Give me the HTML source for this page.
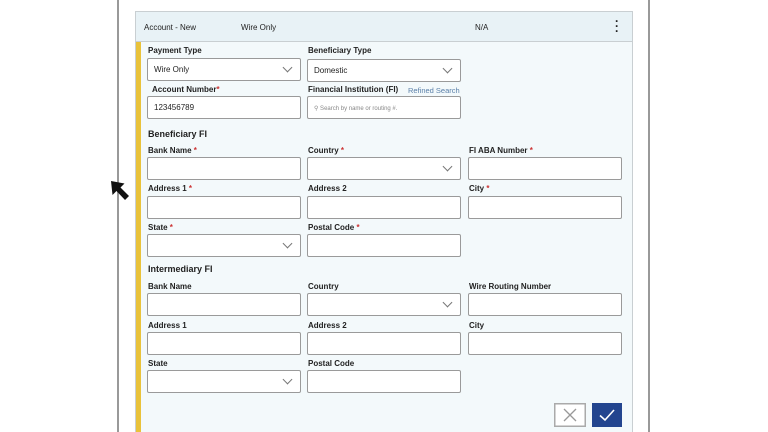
<!DOCTYPE html>
<html><head><meta charset="utf-8"><style>
*{box-sizing:border-box;margin:0;padding:0}
html,body{width:768px;height:432px;overflow:hidden}
body{background:#fff;position:relative;font-family:"Liberation Sans",sans-serif;color:#222}
.frame{position:absolute;top:0;height:432px;width:2px;background:#999}
.card{position:absolute;left:135px;top:11px;width:498px;height:430px;border:1px solid #c9cfd2;background:#f3f9fb}
.hdr{position:absolute;left:0;top:0;width:496px;height:30px;background:#e8f2f6;border-bottom:1px solid #c9cfd2;font-size:8px}
.yb{position:absolute;left:0;top:30px;width:5px;height:400px;background:#e9c23a}
.t{position:absolute;font-size:8px;font-weight:bold;color:#222;white-space:nowrap}
.t i{color:#c33;font-style:normal}
.h{position:absolute;font-size:9px;font-weight:bold;color:#222}
.in{position:absolute;width:154px;height:23px;border:1.5px solid #9a9a9a;border-radius:2px;background:#fff;font-size:8px;padding:6px 6px;color:#222}
.dd::after{content:"";position:absolute;right:9px;top:5px;width:6px;height:6px;border-right:1.3px solid #777;border-bottom:1.3px solid #777;transform:rotate(45deg)}
</style></head><body>
<div class="frame" style="left:117px"></div>
<div class="frame" style="left:648px"></div>
<div class="card">
<div class="hdr">
<span style="position:absolute;left:8px;top:11px">Account - New</span>
<span style="position:absolute;left:105px;top:11px">Wire Only</span>
<span style="position:absolute;left:339px;top:11px">N/A</span>
<span style="position:absolute;left:479px;top:7px;font-size:12px;font-weight:bold;line-height:5px">·<br>·<br>·</span>
</div>
<div class="yb"></div>
</div>
<div class="t" style="left:148px;top:46px">Payment Type</div>
<div class="in dd" style="left:147px;top:58px">Wire Only</div>
<div class="t" style="left:308px;top:46px">Beneficiary Type</div>
<div class="in dd" style="left:307px;top:59px">Domestic</div>
<div class="t" style="left:152px;top:85px">Account Number<i>*</i></div>
<div class="in" style="left:147px;top:96px">123456789</div>
<div class="t" style="left:308px;top:85px">Financial Institution (FI)</div>
<div class="t" style="left:408px;top:86px;font-weight:normal;color:#5a7fa8;font-size:7.5px">Refined Search</div>
<div class="in" style="left:307px;top:96px;font-size:6px;color:#888;padding-top:8px">⚲ Search by name or routing #.</div>

<div class="h" style="left:148px;top:129px">Beneficiary FI</div>
<div class="t" style="left:148px;top:146px">Bank Name <i>*</i></div>
<div class="in" style="left:147px;top:157px"></div>
<div class="t" style="left:308px;top:146px">Country <i>*</i></div>
<div class="in dd" style="left:307px;top:157px"></div>
<div class="t" style="left:469px;top:146px">FI ABA Number <i>*</i></div>
<div class="in" style="left:468px;top:157px"></div>
<div class="t" style="left:148px;top:184px">Address 1 <i>*</i></div>
<div class="in" style="left:147px;top:196px"></div>
<div class="t" style="left:308px;top:184px">Address 2</div>
<div class="in" style="left:307px;top:196px"></div>
<div class="t" style="left:469px;top:184px">City <i>*</i></div>
<div class="in" style="left:468px;top:196px"></div>
<div class="t" style="left:148px;top:223px">State <i>*</i></div>
<div class="in dd" style="left:147px;top:234px"></div>
<div class="t" style="left:308px;top:223px">Postal Code <i>*</i></div>
<div class="in" style="left:307px;top:234px"></div>

<div class="h" style="left:148px;top:264px">Intermediary FI</div>
<div class="t" style="left:148px;top:282px">Bank Name</div>
<div class="in" style="left:147px;top:293px"></div>
<div class="t" style="left:308px;top:282px">Country</div>
<div class="in dd" style="left:307px;top:293px"></div>
<div class="t" style="left:469px;top:282px">Wire Routing Number</div>
<div class="in" style="left:468px;top:293px"></div>
<div class="t" style="left:148px;top:321px">Address 1</div>
<div class="in" style="left:147px;top:332px"></div>
<div class="t" style="left:308px;top:321px">Address 2</div>
<div class="in" style="left:307px;top:332px"></div>
<div class="t" style="left:469px;top:321px">City</div>
<div class="in" style="left:468px;top:332px"></div>
<div class="t" style="left:148px;top:359px">State</div>
<div class="in dd" style="left:147px;top:370px"></div>
<div class="t" style="left:308px;top:359px">Postal Code</div>
<div class="in" style="left:307px;top:370px"></div>

<svg style="position:absolute;left:554px;top:403px" width="32" height="24"><rect x="0.75" y="0.75" width="30.5" height="22.5" fill="#fff" stroke="#aaa" stroke-width="1.5"/><path d="M10 6L22 18M22 6L10 18" stroke="#999" stroke-width="1.3"/></svg>
<svg style="position:absolute;left:592px;top:403px" width="30" height="24"><rect width="30" height="24" fill="#23458f"/><path d="M8 12.5L13 17L22 7" stroke="#fff" stroke-width="1.6" fill="none"/></svg>

<svg style="position:absolute;left:108px;top:178px" width="26" height="26"><path d="M3 3L4.5 17L8.5 13L17 22L21 18L12.5 9.5L16.5 5.5Z" fill="#111"/></svg>
</body></html>
